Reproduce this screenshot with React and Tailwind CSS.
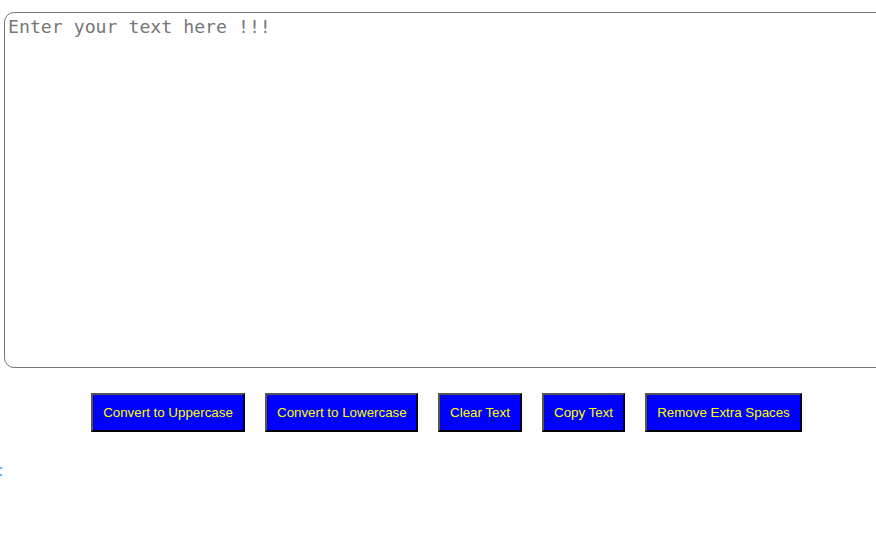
import React from "react";

const btn =
  "h-[39px] px-[10px] bg-[#0000ff] text-[#ffff00] text-[13.33px] border-2 border-t-[#555555] border-l-[#555555] border-b-black border-r-black whitespace-nowrap";

export default function App() {
  return (
    <div className="w-[876px] h-[533px] overflow-hidden bg-white relative" style={{ fontFamily: '"Liberation Sans", Arial, sans-serif' }}>
      <div className="pt-[12px] pl-[4px]">
        <textarea
          placeholder="Enter your text here !!!"
          className="block w-[900px] h-[356px] border border-[#767676] rounded-[10px] px-[3px] pt-[3px] pb-[2px] text-[18.2px] leading-[22px] resize-none outline-none placeholder:text-[#767676]"
          style={{ fontFamily: '"DejaVu Sans Mono", monospace' }}
        />
      </div>
      <div className="flex gap-5 pl-[91px] pt-[25px]">
        <button className={btn + " w-[154px]"}>Convert to Uppercase</button>
        <button className={btn + " w-[153px]"}>Convert to Lowercase</button>
        <button className={btn + " w-[84px]"}>Clear Text</button>
        <button className={btn + " w-[83px]"}>Copy Text</button>
        <button className={btn + " w-[157px]"}>Remove Extra Spaces</button>
      </div>
      <div className="absolute left-0 top-[467px] flex flex-col gap-[5px]">
        <div className="w-[2px] h-[2px] bg-[#5ab4ff]" />
        <div className="w-[2px] h-[2px] bg-[#5ab4ff]" />
      </div>
    </div>
  );
}
